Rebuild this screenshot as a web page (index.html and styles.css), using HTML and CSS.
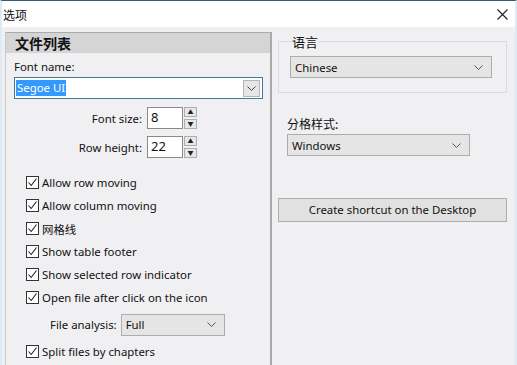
FILE: index.html
```html
<!DOCTYPE html>
<html lang="zh">
<head>
  <meta charset="UTF-8">
  <title>选项</title>
  <link rel="stylesheet" href="styles.css">
</head>
<body>
  <div class="window">
    <div class="titlebar">
      <span class="title">选项</span>
      <span class="close">
        <svg width="11" height="11" viewBox="0 0 11 11"><path d="M0.5 0.5 L10.5 10.5 M10.5 0.5 L0.5 10.5" stroke="#222" stroke-width="1.1" fill="none"/></svg>
      </span>
    </div>

    <div class="content">
      <div class="left-panel">
        <div class="panel-head">文件列表</div>
        <div class="panel-body">
          <div class="field-label">Font name:</div>
          <div class="combo focused">
            <span class="combo-text"><span class="sel">Segoe UI</span></span>
            <span class="combo-btn">
              <svg width="9" height="5" viewBox="0 0 9 5"><path d="M0.5 0.5 L4.5 4.5 L8.5 0.5" stroke="#444" fill="none"/></svg>
            </span>
          </div>

          <div class="spin-row">
            <label>Font size:</label>
            <div class="spin-input">8</div>
            <div class="spin-btns">
              <span class="spin-btn">&#9650;</span>
              <span class="spin-btn">&#9660;</span>
            </div>
          </div>
          <div class="spin-row">
            <label>Row height:</label>
            <div class="spin-input">22</div>
            <div class="spin-btns">
              <span class="spin-btn">&#9650;</span>
              <span class="spin-btn">&#9660;</span>
            </div>
          </div>

          <div class="checks">
            <div class="check"><span class="box"><svg width="11" height="11" viewBox="0 0 11 11"><path d="M1.5 5.5 L4.2 8.5 L9.5 1.5" stroke="#222" stroke-width="1.1" fill="none"/></svg></span>Allow row moving</div>
            <div class="check"><span class="box"><svg width="11" height="11" viewBox="0 0 11 11"><path d="M1.5 5.5 L4.2 8.5 L9.5 1.5" stroke="#222" stroke-width="1.1" fill="none"/></svg></span>Allow column moving</div>
            <div class="check"><span class="box"><svg width="11" height="11" viewBox="0 0 11 11"><path d="M1.5 5.5 L4.2 8.5 L9.5 1.5" stroke="#222" stroke-width="1.1" fill="none"/></svg></span>网格线</div>
            <div class="check"><span class="box"><svg width="11" height="11" viewBox="0 0 11 11"><path d="M1.5 5.5 L4.2 8.5 L9.5 1.5" stroke="#222" stroke-width="1.1" fill="none"/></svg></span>Show table footer</div>
            <div class="check"><span class="box"><svg width="11" height="11" viewBox="0 0 11 11"><path d="M1.5 5.5 L4.2 8.5 L9.5 1.5" stroke="#222" stroke-width="1.1" fill="none"/></svg></span>Show selected row indicator</div>
            <div class="check"><span class="box"><svg width="11" height="11" viewBox="0 0 11 11"><path d="M1.5 5.5 L4.2 8.5 L9.5 1.5" stroke="#222" stroke-width="1.1" fill="none"/></svg></span>Open file after click on the icon</div>
            <div class="analysis-row">
              <label>File analysis:</label>
              <div class="combo flat small">
                <span class="combo-text">Full</span>
                <svg width="9" height="5" viewBox="0 0 9 5"><path d="M0.5 0.5 L4.5 4.5 L8.5 0.5" stroke="#555" fill="none"/></svg>
              </div>
            </div>
            <div class="check"><span class="box"><svg width="11" height="11" viewBox="0 0 11 11"><path d="M1.5 5.5 L4.2 8.5 L9.5 1.5" stroke="#222" stroke-width="1.1" fill="none"/></svg></span>Split files by chapters</div>
          </div>
        </div>
      </div>

      <div class="right-panel">
        <fieldset class="group">
          <legend>语言</legend>
          <div class="combo flat lang">
            <span class="combo-text">Chinese</span>
            <svg width="9" height="5" viewBox="0 0 9 5"><path d="M0.5 0.5 L4.5 4.5 L8.5 0.5" stroke="#555" fill="none"/></svg>
          </div>
        </fieldset>

        <div class="sep-label">分格样式:</div>
        <div class="combo flat sep">
          <span class="combo-text">Windows</span>
          <svg width="9" height="5" viewBox="0 0 9 5"><path d="M0.5 0.5 L4.5 4.5 L8.5 0.5" stroke="#555" fill="none"/></svg>
        </div>

        <div class="button">Create shortcut on the Desktop</div>
      </div>
    </div>
  </div>
</body>
</html>
```

FILE: styles.css
```css
body {
  margin: 0;
  font-family: "Noto Sans", "Noto Sans CJK SC", sans-serif;
  font-size: 11.4px;
  color: #111;
}
.window {
  width: 517px;
  height: 365px;
  box-sizing: border-box;
  border-top: 1px solid #2f5f72;
  border-left: 2px solid #dcebf6;
  border-right: 2px solid #dcebf6;
  background-color: #f0eff1;
  display: flex;
  flex-direction: column;
  overflow: hidden;
}
.titlebar {
  height: 26px;
  background-color: #fff;
  display: flex;
  align-items: center;
  justify-content: space-between;
  padding: 0 8px 0 1px;
  margin-left: -2px;
  margin-right: -2px;
}
.title {
  font-family: "Noto Sans CJK SC", sans-serif;
  font-size: 12px;
  padding-left: 2px;
}
.close {
  display: flex;
  margin-top: 1px;
  margin-right: 1px;
}
.content {
  flex: 1;
  display: flex;
  padding-top: 5px;
}
.left-panel {
  width: 265px;
  margin-left: 3px;
  border-left: 1px solid #c8c8c8;
  border-right: 2px solid #a9a9a9;
}
.panel-head {
  height: 20px;
  background-color: #d5d5d6;
  border-top: 1px solid #aaa;
  font-family: "Noto Sans CJK SC", sans-serif;
  font-weight: bold;
  font-size: 14px;
  line-height: 20px;
  padding-left: 9px;
}
.panel-body {
  padding: 6px 0 0 8px;
}
.field-label {
  height: 16px;
  line-height: 16px;
  margin-bottom: 2px;
}
.combo {
  display: flex;
  align-items: center;
  justify-content: space-between;
  box-sizing: border-box;
}
.combo.focused {
  width: 249px;
  height: 22px;
  border: 1px solid #3d7ba0;
  background-color: #fff;
  padding: 0 2px 0 1px;
}
.sel {
  background-color: #3399ff;
  color: #fff;
  padding: 0 1px;
  line-height: 16px;
  display: inline-block;
}
.combo-btn {
  width: 17px;
  height: 17px;
  box-sizing: border-box;
  background-color: #e6e6e6;
  border: 1px solid #b5b5b5;
  display: flex;
  align-items: center;
  justify-content: center;
}
.spin-row {
  display: flex;
  align-items: center;
  margin-top: 8px;
  height: 22px;
}
.spin-row + .spin-row {
  margin-top: 7px;
}
.spin-row label {
  width: 128px;
  text-align: right;
  margin-right: 5px;
}
.spin-input {
  width: 36px;
  height: 22px;
  box-sizing: border-box;
  border: 1px solid #8a8a8a;
  background-color: #fff;
  padding-left: 3px;
  line-height: 18px;
  font-size: 13px;
}
.spin-btns {
  display: flex;
  flex-direction: column;
  gap: 2px;
  margin-left: 1px;
}
.spin-btn {
  width: 13px;
  height: 10px;
  box-sizing: border-box;
  border: 1px solid #adadad;
  background-color: #e8e8e8;
  font-size: 6px;
  line-height: 8px;
  text-align: center;
  color: #222;
}
.checks {
  margin-top: 13px;
  padding-left: 12px;
}
.check {
  height: 23px;
  display: flex;
  align-items: center;
}
.box {
  width: 13px;
  height: 13px;
  box-sizing: border-box;
  border: 1px solid #333;
  background-color: #fff;
  margin-right: 3px;
  display: flex;
  align-items: center;
  justify-content: center;
}
.analysis-row {
  height: 31px;
  display: flex;
  align-items: center;
  padding-left: 24px;
}
.analysis-row label {
  margin-right: 4px;
}
.combo.flat {
  height: 22px;
  border: 1px solid #adadad;
  background-color: #e5e5e5;
  padding: 0 8px 0 4px;
}
.combo.small {
  width: 104px;
}
.right-panel {
  flex: 1;
  padding-left: 6px;
  padding-right: 8px;
}
.group {
  margin: 0;
  padding: 5px 14px 14px 11px;
  border: 1px solid #dcdcdc;
}
.group legend {
  font-family: "Noto Sans CJK SC", sans-serif;
  font-size: 13px;
  padding: 0;
  margin-left: 2px;
}
.combo.lang {
  width: 202px;
}
.sep-label {
  font-family: "Noto Sans CJK SC", sans-serif;
  font-size: 12px;
  margin-top: 22px;
  margin-left: 9px;
  height: 17px;
  line-height: 17px;
}
.combo.sep {
  width: 183px;
  margin-left: 9px;
  margin-top: 2px;
}
.button {
  margin-top: 42px;
  height: 24px;
  box-sizing: border-box;
  border: 1px solid #adadad;
  background-color: #e1e1e1;
  text-align: center;
  line-height: 22px;
}
```
